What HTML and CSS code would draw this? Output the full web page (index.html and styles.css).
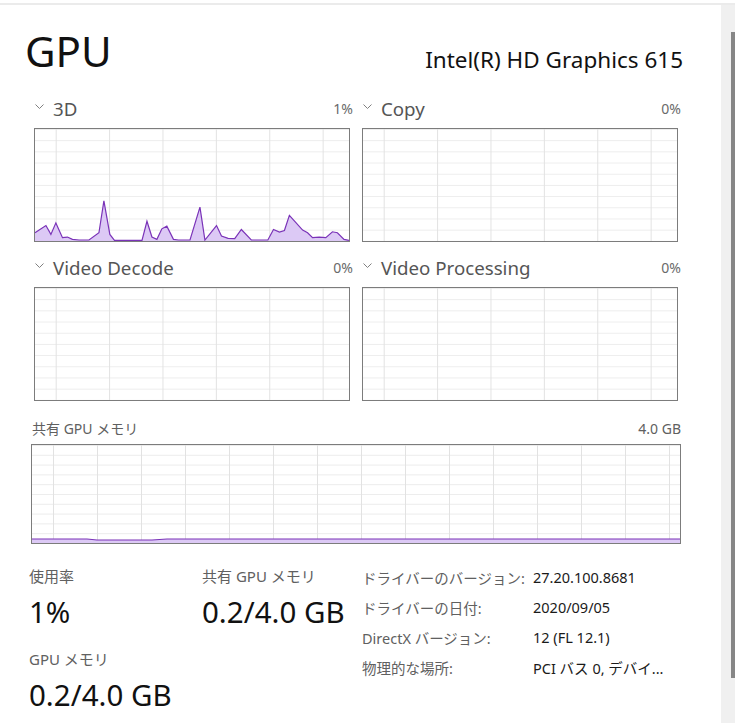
FILE: index.html
```html
<!DOCTYPE html>
<html lang="ja">
<head>
<meta charset="utf-8">
<title>GPU</title>
<link rel="stylesheet" href="styles.css">
</head>
<body>
<div class="topline"></div>
<div class="window">
  <main class="content">
    <header class="head">
      <h1 class="title">GPU</h1>
      <div class="model">Intel(R) HD Graphics 615</div>
    </header>

    <section class="engines">
      <div class="engine">
        <div class="elabel">
          <span class="name"><svg class="chev" viewBox="0 0 9 5" width="9" height="5"><polyline points="0.5,0.5 4.5,4.5 8.5,0.5"/></svg>3D</span>
          <span class="pct">1%</span>
        </div>
        <div class="graph grid-s">
          <svg class="plot" viewBox="42 115 948 340" preserveAspectRatio="none">
            <path class="area" d="M42,455 L42,430 L75,408 L90,435 L105,400 L125,445 L140,443 L155,450 L175,452 L205,452 L235,430 L250,333 L268,435 L282,453 L365,453 L380,395 L395,443 L410,450 L425,418 L440,410 L460,450 L475,452 L510,452 L540,352 L555,452 L590,408 L605,440 L625,447 L645,448 L665,420 L695,452 L745,452 L762,420 L780,428 L795,423 L810,377 L850,422 L865,430 L880,445 L900,443 L920,445 L940,427 L955,430 L975,450 L990,453 L990,455 Z"/>
            <path class="line" d="M42,430 L75,408 L90,435 L105,400 L125,445 L140,443 L155,450 L175,452 L205,452 L235,430 L250,333 L268,435 L282,453 L365,453 L380,395 L395,443 L410,450 L425,418 L440,410 L460,450 L475,452 L510,452 L540,352 L555,452 L590,408 L605,440 L625,447 L645,448 L665,420 L695,452 L745,452 L762,420 L780,428 L795,423 L810,377 L850,422 L865,430 L880,445 L900,443 L920,445 L940,427 L955,430 L975,450 L990,453"/>
          </svg>
        </div>
      </div>
      <div class="engine">
        <div class="elabel">
          <span class="name"><svg class="chev" viewBox="0 0 9 5" width="9" height="5"><polyline points="0.5,0.5 4.5,4.5 8.5,0.5"/></svg>Copy</span>
          <span class="pct">0%</span>
        </div>
        <div class="graph grid-s"></div>
      </div>
      <div class="engine">
        <div class="elabel">
          <span class="name"><svg class="chev" viewBox="0 0 9 5" width="9" height="5"><polyline points="0.5,0.5 4.5,4.5 8.5,0.5"/></svg>Video Decode</span>
          <span class="pct">0%</span>
        </div>
        <div class="graph grid-s"></div>
      </div>
      <div class="engine">
        <div class="elabel">
          <span class="name"><svg class="chev" viewBox="0 0 9 5" width="9" height="5"><polyline points="0.5,0.5 4.5,4.5 8.5,0.5"/></svg>Video Processing</span>
          <span class="pct">0%</span>
        </div>
        <div class="graph grid-s"></div>
      </div>
    </section>

    <section class="shared">
      <div class="slabel"><span>共有 GPU メモリ</span><span>4.0 GB</span></div>
      <div class="graph grid-l">
        <svg class="plot" viewBox="0 0 648 98" preserveAspectRatio="none">
          <path class="area" d="M0,98 L0,94 L55,94 L65,95 L120,95 L135,94 L648,94 L648,98 Z"/>
          <path class="line" d="M0,94 L55,94 L65,95 L120,95 L135,94 L648,94"/>
        </svg>
      </div>
    </section>

    <section class="stats">
      <div class="col">
        <div class="stat">
          <div class="sl">使用率</div>
          <div class="sv">1%</div>
        </div>
        <div class="stat">
          <div class="sl">GPU メモリ</div>
          <div class="sv">0.2/4.0 GB</div>
        </div>
      </div>
      <div class="col">
        <div class="stat">
          <div class="sl">共有 GPU メモリ</div>
          <div class="sv">0.2/4.0 GB</div>
        </div>
      </div>
      <dl class="info">
        <dt>ドライバーのバージョン:</dt><dd>27.20.100.8681</dd>
        <dt>ドライバーの日付:</dt><dd>2020/09/05</dd>
        <dt>DirectX バージョン:</dt><dd>12 (FL 12.1)</dd>
        <dt>物理的な場所:</dt><dd>PCI バス 0, デバイ...</dd>
      </dl>
    </section>
  </main>
  <aside class="scrollbar"><div class="thumb"></div></aside>
</div>
</body>
</html>
```

FILE: styles.css
```css
html, body {
  margin: 0;
  padding: 0;
  background: #ffffff;
}

body {
  font-family: "Noto Sans", "Noto Sans CJK JP", sans-serif;
  color: #1a1a1a;
  height: 723px;
  overflow: hidden;
  padding-top: 3px;
  box-sizing: border-box;
}

.topline {
  height: 2px;
  background: #ebebeb;
}

.window {
  display: flex;
  height: 718px;
}

.content {
  width: 721px;
  box-sizing: border-box;
  padding: 0 40px 0 31px;
}

.head {
  display: flex;
  justify-content: space-between;
  align-items: baseline;
  height: 88px;
}

.title {
  margin: 0 0 0 -6px;
  font-weight: 400;
  font-size: 42px;
  line-height: 1;
  padding-top: 25px;
  color: #111;
}

.model {
  font-size: 22.5px;
  color: #111;
  margin-right: -2px;
  position: relative;
  top: 1px;
}

.engines {
  display: grid;
  grid-template-columns: 316px 316px;
  column-gap: 12px;
  row-gap: 10px;
  padding: 0 3px;
}

.elabel {
  display: flex;
  justify-content: space-between;
  align-items: center;
  height: 30px;
  margin-right: -3px;
  margin-bottom: 5px;
}

.name {
  display: flex;
  align-items: center;
  font-size: 18.7px;
  color: #555;
}

.chev {
  fill: none;
  stroke: #808080;
  stroke-width: 1;
  margin: 0 9px 3px 1px;
}

.pct {
  font-size: 14px;
  color: #6a6a6a;
}

.graph {
  border: 1px solid #7c7c7c;
  box-sizing: border-box;
  position: relative;
  background-color: #fff;
}

.grid-s {
  height: 114px;
  background-image:
    linear-gradient(to right, #e2e2e2 1px, transparent 1px),
    linear-gradient(to bottom, #ececec 1px, transparent 1px);
  background-size: 53.4px 100%, 100% 11.2px;
  background-position: 20.7px 0, 0 0;
}

.grid-l {
  height: 100px;
  background-image:
    linear-gradient(to right, #e2e2e2 1px, transparent 1px),
    linear-gradient(to bottom, #ececec 1px, transparent 1px);
  background-size: 44px 100%, 100% 9.8px;
  background-position: 21px 0, 0 0;
}

.plot {
  display: block;
  width: 100%;
  height: 100%;
}

.area {
  fill: #dcc9f5;
}

.line {
  fill: none;
  stroke: #7a33b8;
  stroke-width: 1.2;
  vector-effect: non-scaling-stroke;
}

.shared {
  margin-top: 13px;
}

.slabel {
  display: flex;
  justify-content: space-between;
  align-items: center;
  height: 28px;
  font-size: 14px;
  color: #606060;
  margin: 0 0 2px 1px;
}

.stats {
  display: grid;
  grid-template-columns: 173px 160px 1fr;
  margin: 21px 0 0 -2px;
}

.col {
  display: flex;
  flex-direction: column;
}

.stat {
  display: flex;
  flex-direction: column;
  height: 83px;
}

.sl {
  font-size: 15px;
  color: #606060;
  line-height: 22px;
}

.sv {
  font-size: 29.5px;
  color: #111;
  line-height: 40px;
  margin-top: 5px;
}

.info {
  margin: -3px 0 0 0;
  display: grid;
  grid-template-columns: 171px 1fr;
  grid-auto-rows: 30px;
  align-items: center;
  font-size: 14.5px;
}

.info dt {
  color: #606060;
}

.info dd {
  margin: 0;
  color: #1a1a1a;
}

.scrollbar {
  width: 14px;
  background: #f0f0f0;
  display: flex;
  justify-content: flex-end;
}

.thumb {
  width: 4px;
  height: 646px;
  margin-top: 27px;
  background: #868686;
}
```
